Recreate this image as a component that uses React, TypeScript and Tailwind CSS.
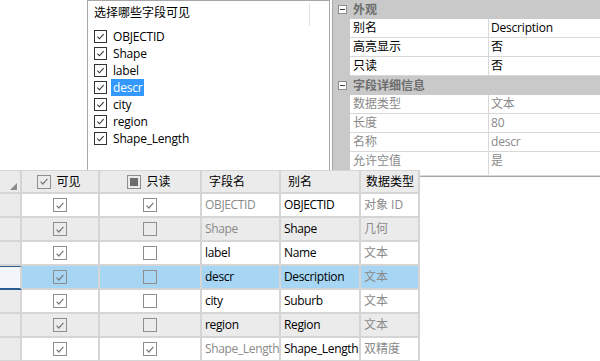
import React from 'react';

const FONT = "font-['Open_Sans','Noto_Sans_CJK_SC',sans-serif]";

const CheckMark = ({ color }: { color: string }) => (
  <svg width="13" height="13" viewBox="0 0 13 13" className="block">
    <polyline points="2.8,6.6 5.3,9.2 10.2,3.6" fill="none" stroke={color} strokeWidth="1.3" />
  </svg>
);

const ListBox = () => (
  <span className="flex h-[13px] w-[13px] items-center justify-center border border-[#333] bg-white">
    <CheckMark color="#333" />
  </span>
);

const GridBox = ({ checked, mixed }: { checked?: boolean; mixed?: boolean }) => (
  <span className="flex h-[14px] w-[14px] items-center justify-center border border-[#8e8e8e]">
    {checked && <CheckMark color="#7a7a7a" />}
    {mixed && <span className="h-[8px] w-[8px] bg-[#6d6d6d]" />}
  </span>
);

const MinusBox = () => (
  <span className="flex h-[9px] w-[9px] items-center justify-center border border-[#8f8f8f] bg-white">
    <span className="h-px w-[5px] bg-[#404040]" />
  </span>
);

const fields = ['OBJECTID', 'Shape', 'label', 'descr', 'city', 'region', 'Shape_Length'];

type Prop = { name: string; value: string };
const sections: { title: string; muted: boolean; props: Prop[] }[] = [
  {
    title: '外观',
    muted: false,
    props: [
      { name: '别名', value: 'Description' },
      { name: '高亮显示', value: '否' },
      { name: '只读', value: '否' },
    ],
  },
  {
    title: '字段详细信息',
    muted: true,
    props: [
      { name: '数据类型', value: '文本' },
      { name: '长度', value: '80' },
      { name: '名称', value: 'descr' },
      { name: '允许空值', value: '是' },
    ],
  },
];

type Row = {
  field: string;
  alias: string;
  type: string;
  readOnly: boolean;
  system: boolean;
  tone: 'white' | 'gray' | 'sel';
};

const rows: Row[] = [
  { field: 'OBJECTID', alias: 'OBJECTID', type: '对象 ID', readOnly: true, system: true, tone: 'white' },
  { field: 'Shape', alias: 'Shape', type: '几何', readOnly: false, system: true, tone: 'gray' },
  { field: 'label', alias: 'Name', type: '文本', readOnly: false, system: false, tone: 'white' },
  { field: 'descr', alias: 'Description', type: '文本', readOnly: false, system: false, tone: 'sel' },
  { field: 'city', alias: 'Suburb', type: '文本', readOnly: false, system: false, tone: 'white' },
  { field: 'region', alias: 'Region', type: '文本', readOnly: false, system: false, tone: 'gray' },
  { field: 'Shape_Length', alias: 'Shape_Length', type: '双精度', readOnly: true, system: true, tone: 'white' },
];

const toneBg = {
  white: 'bg-white',
  gray: 'bg-[#ebebeb]',
  sel: 'bg-[#a6d6f3]',
};

const cell = 'flex items-center border-r-2 border-b-2 border-[#d5d5d5] overflow-hidden whitespace-nowrap';

const App: React.FC = () => {
  return (
    <div className={`relative h-[361px] w-[600px] overflow-hidden bg-white text-[12px] leading-none text-black ${FONT}`}>
      {/* top area */}
      <div className="flex h-[170px]">
        <div className="w-[87px] shrink-0" />

        {/* field visibility list */}
        <div className="relative w-[243px] shrink-0 border-x border-t border-[#a7a7a7] pl-[6px] pt-[5px]">
          <div className="absolute left-[221px] top-[2px] h-[23px] w-px bg-[#e3e3e3]" />
          <div className="h-[19px] pt-[1px] text-[12px]">选择哪些字段可见</div>
          <div className="mt-[3px] flex flex-col">
            {fields.map((f) => (
              <div key={f} className="flex h-[17px] items-center">
                <ListBox />
                <span
                  className={`ml-[4px] flex h-[17px] items-center px-[2px] tracking-[-0.2px] ${
                    f === 'descr' ? 'bg-[#3399ff] text-white' : ''
                  }`}
                >
                  {f}
                </span>
              </div>
            ))}
          </div>
        </div>

        <div className="w-[2px] shrink-0" />

        {/* property grid */}
        <div className="flex h-[177px] flex-1 flex-col border-l border-b border-[#a7a7a7]">
          {sections.map((s) => (
            <React.Fragment key={s.title}>
              <div className="flex h-[19px] shrink-0 items-center bg-[#c9c9c9]">
                <div className="flex w-[17px] justify-center pl-[1px]">
                  <MinusBox />
                </div>
                <span className="pl-[3px] font-bold text-[#6e6e6e]">{s.title}</span>
              </div>
              {s.props.map((p, i) => {
                const last = s.muted && i === s.props.length - 1;
                return (
                  <div key={p.name} className={`flex ${last ? 'flex-1' : 'h-[19px]'} shrink-0`}>
                    <div className="w-[17px] shrink-0 bg-[#c9c9c9]" />
                    <div
                      className={`flex w-[139px] shrink-0 border-r border-b border-[#d8d8d8] pl-[3px] ${
                        last ? 'items-start pt-[3px]' : 'items-center'
                      } ${s.muted ? 'text-[#8a8a8a]' : ''}`}
                    >
                      {p.name}
                    </div>
                    <div
                      className={`flex flex-1 border-b border-[#d8d8d8] pl-[2px] tracking-[-0.2px] ${
                        last ? 'items-start pt-[3px]' : 'items-center'
                      } ${s.muted ? 'text-[#8a8a8a]' : ''}`}
                    >
                      {p.value}
                    </div>
                  </div>
                );
              })}
            </React.Fragment>
          ))}
        </div>
      </div>

      {/* fields table */}
      <div className="relative z-10 grid w-[420px] grid-cols-[22px_78px_102px_79px_80px_59px] border-t border-[#d5d5d5] bg-white">
        {/* header */}
        <div className={`${cell} h-[23px] items-end justify-end bg-[#ebebeb] pb-[2px] pr-[3px]`}>
          <svg width="7" height="7" viewBox="0 0 7 7">
            <polygon points="7,0 7,7 0,7" fill="#8c8c8c" />
          </svg>
        </div>
        <div className={`${cell} h-[23px] justify-center gap-[5px] bg-[#ebebeb] pr-[2px]`}>
          <GridBox checked />
          <span>可见</span>
        </div>
        <div className={`${cell} h-[23px] justify-center gap-[5px] bg-[#ebebeb] pr-[2px]`}>
          <GridBox mixed />
          <span>只读</span>
        </div>
        <div className={`${cell} h-[23px] bg-[#ebebeb] pl-[7px]`}>字段名</div>
        <div className={`${cell} h-[23px] bg-[#ebebeb] pl-[7px]`}>别名</div>
        <div className={`${cell} h-[23px] bg-[#ebebeb] pl-[5px]`}>数据类型</div>

        {rows.map((r) => {
          const bg = toneBg[r.tone];
          return (
            <React.Fragment key={r.field}>
              <div
                className={`${cell} h-[24px] ${
                  r.tone === 'sel'
                    ? 'border-t border-t-[#2a5d8f] border-b-[#2a5d8f] bg-[#f2f6fa]'
                    : 'bg-[#ebebeb]'
                }`}
              />
              <div className={`${cell} h-[24px] justify-center ${bg}`}>
                <GridBox checked />
              </div>
              <div className={`${cell} h-[24px] justify-center ${bg}`}>
                <GridBox checked={r.readOnly} />
              </div>
              <div
                className={`${cell} h-[24px] pl-[3px] tracking-[-0.35px] ${bg} ${
                  r.system ? 'text-[#8a8a8a]' : ''
                }`}
              >
                {r.field}
              </div>
              <div className={`${cell} h-[24px] pl-[3px] tracking-[-0.35px] ${bg}`}>{r.alias}</div>
              <div className={`${cell} h-[24px] pl-[3px] text-[#8a8a8a] ${bg}`}>{r.type}</div>
            </React.Fragment>
          );
        })}
      </div>
    </div>
  );
};

export default App;
